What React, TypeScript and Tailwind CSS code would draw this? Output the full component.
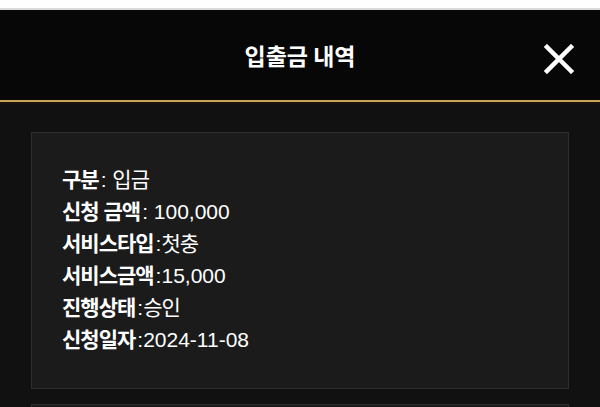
import React from "react";

const rows: { label: string; sep: string; value: string; ko?: boolean }[] = [
  { label: "구분", sep: ": ", value: "입금", ko: true },
  { label: "신청 금액", sep: ": ", value: "100,000" },
  { label: "서비스타입", sep: ":", value: "첫충", ko: true },
  { label: "서비스금액", sep: ":", value: "15,000" },
  { label: "진행상태", sep: ":", value: "승인", ko: true },
  { label: "신청일자", sep: ":", value: "2024-11-08" },
];

export default function App() {
  return (
    <div
      className="w-[600px] h-[407px] overflow-hidden bg-[#111111]"
      style={{ fontFamily: '"Liberation Sans", "Noto Sans CJK KR", sans-serif' }}
    >
      <div className="h-[8px] bg-white" />
      <div className="h-[2px] bg-[#d9d9d9]" />
      <div className="relative h-[90px] bg-[#070707] flex items-center justify-center">
        <span
          className="text-[23px] font-bold text-white"
          style={{ fontFamily: '"Noto Sans CJK KR", sans-serif' }}
        >
          입출금 내역
        </span>
        <svg
          className="absolute right-[26px] top-[34px]"
          width="30"
          height="30"
          viewBox="0 0 30 30"
        >
          <path d="M3 3 L27 27 M27 3 L3 27" stroke="white" strokeWidth="4.5" strokeLinecap="square" />
        </svg>
      </div>
      <div className="h-[2px] bg-[#c9a65a]" />
      <div className="h-[2px] bg-[#1a140c]" />
      <div className="px-[31px] pt-[28px] flex flex-col gap-[15px]">
        <div className="bg-[#1b1b1b] border border-[#2e2e2e] pl-[30px] pt-[31px] pb-[32px]">
          {rows.map((r) => (
            <div key={r.label} className="h-[32px] leading-[32px] text-[21px] text-white whitespace-nowrap">
              <span className="font-bold tracking-[-1px]">{r.label}</span>
              <span className="pl-[2px]">{r.sep}</span>
              <span className={r.ko ? "tracking-[-1px]" : ""}>{r.value}</span>
            </div>
          ))}
        </div>
        <div className="bg-[#1b1b1b] border border-[#2e2e2e] h-[100px]" />
      </div>
    </div>
  );
}
